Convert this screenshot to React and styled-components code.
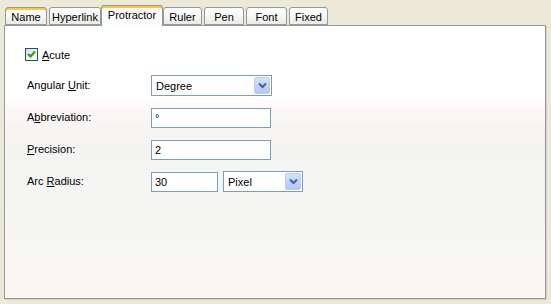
import React from 'react'
import styled, { createGlobalStyle } from 'styled-components'

const GlobalStyle = createGlobalStyle`
	html, body {
		margin: 0;
		padding: 0;
		background: #ece9d8;
		font-family: "Liberation Sans", Arial, sans-serif;
		font-size: 11px;
		color: #000;
	}
`;

const tabs = [
	{ name: 'Name', width: 42, hover: true },
	{ name: 'Hyperlink', width: 52 },
	{ name: 'Protractor', width: 62, selected: true },
	{ name: 'Ruler', width: 39 },
	{ name: 'Pen', width: 40 },
	{ name: 'Font', width: 41 },
	{ name: 'Fixed', width: 39 },
];

const Chevron = () => (
	<svg width="9" height="7" viewBox="0 0 9 7">
		<path d="M1 1.5 L4.5 5 L8 1.5" fill="none" stroke="#4d6185" strokeWidth="2" />
	</svg>
);

const ComboBox = ({ value, width }) => (
	<Combo $width={width}>
		<ComboText>{value}</ComboText>
		<DropButton><Chevron /></DropButton>
	</Combo>
);

export default function App() {
	return (
		<>
			<GlobalStyle />
			<Window>
				<TabStrip>
					{tabs.map(t => (
						<Tab key={t.name} $width={t.width} $selected={t.selected} $hover={t.hover}>
							{t.name}
						</Tab>
					))}
				</TabStrip>

				<Panel>
					<CheckRow>
						<CheckBox>
							<svg width="9" height="9" viewBox="0 0 9 9">
								<path d="M1 4 L3.5 6.5 L8 1.5" fill="none" stroke="#21a121" strokeWidth="2.2" />
							</svg>
						</CheckBox>
						<span><u>A</u>cute</span>
					</CheckRow>

					<Form>
						{/* Angular Unit */}
						<Label>Angular <u>U</u>nit:</Label>
						<Controls>
							<ComboBox value="Degree" width={121} />
						</Controls>

						{/* Abbreviation */}
						<Label>A<u>b</u>breviation:</Label>
						<Controls>
							<TextInput $width={120}>°</TextInput>
						</Controls>

						{/* Precision */}
						<Label><u>P</u>recision:</Label>
						<Controls>
							<TextInput $width={120}>2</TextInput>
						</Controls>

						{/* Arc Radius */}
						<Label>Arc <u>R</u>adius:</Label>
						<Controls>
							<TextInput $width={67}>30</TextInput>
							<ComboBox value="Pixel" width={80} />
						</Controls>
					</Form>
				</Panel>
			</Window>
		</>
	)
}

const Window = styled.div`
	width: 551px;
	height: 304px;
	box-sizing: border-box;
	padding: 0 5px 5px 4px;
	display: flex;
	flex-direction: column;
`;

const TabStrip = styled.div`
	height: 25px;
	display: flex;
	align-items: flex-end;
	padding-left: 1px;
	position: relative;
	z-index: 2;
`;

const Tab = styled.div`
	box-sizing: border-box;
	width: ${p => p.$width}px;
	height: ${p => p.$selected ? 21 : 18}px;
	margin-right: ${p => p.$selected ? 0 : 2}px;
	margin-left: ${p => p.$selected ? -2 : 0}px;
	margin-bottom: ${p => p.$selected ? -1 : 0}px;
	border: 1px solid #919b9c;
	border-bottom: ${p => p.$selected ? 'none' : '1px solid #919b9c'};
	border-radius: 3px 3px 0 0;
	background: ${p => p.$selected
		? '#fcfcfe'
		: 'linear-gradient(to bottom, #fefefe 0%, #f7f7f4 50%, #ebeae4 100%)'};
	box-shadow: ${p => (p.$selected || p.$hover)
		? 'inset 0 2px 0 #ffc83c, inset 0 1px 0 #e68b2c'
		: 'none'};
	display: flex;
	align-items: center;
	justify-content: center;
	padding-top: ${p => p.$selected ? 0 : 2}px;
	padding-bottom: ${p => p.$selected ? 3 : 0}px;
	white-space: nowrap;
`;

const Panel = styled.div`
	flex: 1;
	border: 1px solid #919b9c;
	box-shadow: 1px 1px 0 #d4d0c2;
	background: linear-gradient(to bottom, #ffffff 0px, #ffffff 70px, #fdf9f8 82px, #f7f5f3 100px, #f4f4f3 125px, #f8f7f2 100%);
	padding: 22px 0 0 20px;
`;

const CheckRow = styled.label`
	display: flex;
	align-items: center;
	gap: 4px;
	height: 13px;
`;

const CheckBox = styled.span`
	box-sizing: border-box;
	width: 13px;
	height: 13px;
	border: 1px solid #1c5180;
	background: linear-gradient(135deg, #dcdcd7 0%, #f5f5f3 60%, #ffffff 100%);
	display: flex;
	align-items: center;
	justify-content: center;
`;

const Form = styled.div`
	margin-top: 14px;
	display: grid;
	grid-template-columns: 124px auto;
	grid-auto-rows: 21px;
	row-gap: 11px;
	align-items: center;
	padding-left: 2px;
`;

const Label = styled.div`
	line-height: 21px;
`;

const Controls = styled.div`
	display: flex;
	align-items: center;
	gap: 5px;
`;

const TextInput = styled.div`
	box-sizing: border-box;
	width: ${p => p.$width}px;
	height: 20px;
	border: 1px solid #7f9db9;
	background: #fff;
	padding-left: 3px;
	line-height: 18px;
`;

const Combo = styled.div`
	box-sizing: border-box;
	width: ${p => p.$width}px;
	height: 21px;
	border: 1px solid #7f9db9;
	background: #fff;
	display: flex;
	align-items: center;
	padding: 1px;
`;

const ComboText = styled.span`
	flex: 1;
	padding-left: 3px;
`;

const DropButton = styled.span`
	box-sizing: border-box;
	width: 16px;
	height: 17px;
	border: 1px solid #b9cdf7;
	border-radius: 2px;
	background: linear-gradient(to bottom, #d6e2fc 0%, #c1d3fb 50%, #b1c7f6 100%);
	display: flex;
	align-items: center;
	justify-content: center;
`;
